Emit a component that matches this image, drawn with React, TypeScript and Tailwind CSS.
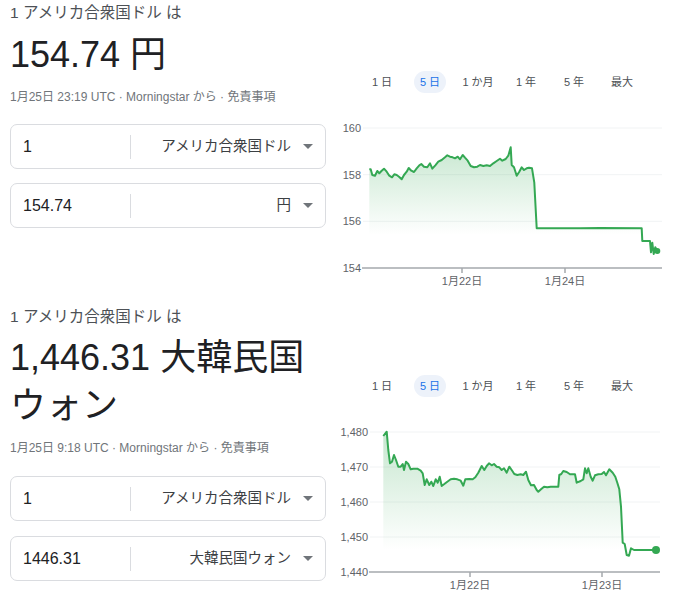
import React from 'react';

interface Tick {
    pos: number;
    label: string;
}

interface ChartProps {
    id: string;
    top: number;
    gridStart: number;
    gridEnd: number;
    labelEnd: number;
    yTicks: Tick[];
    xTicks: Tick[];
    axisY: number;
    points: number[][];
    fadeFrom: number;
    fadeTo: number;
    dotR: number;
}

const tabs = ['1 日', '5 日', '1 か月', '1 年', '5 年', '最大'];

// usd/jpy, 5 days
const jpyPoints = [
    [369.3, 169.3], [370.7, 169.3], [372.3, 175], [375, 175.7], [377.3, 171], [379.3, 173.3], [381.7, 170.7],
    [384, 168.7], [386.7, 171.7], [389.3, 175.7], [392, 177.3], [394.3, 174.3], [396.7, 175], [399, 176.7],
    [401.7, 179.3], [404, 175], [406.7, 171.7], [408.7, 168], [411.3, 170.7], [414, 172], [416.7, 168.3],
    [419.3, 165.3], [421.3, 164], [424, 166.7], [427.3, 167.3], [430, 163.3], [432.3, 168.7], [435.3, 165.3],
    [438.3, 161.7], [441.7, 160], [445, 157.3], [447.3, 155.3], [450, 156.7], [452.7, 157.3], [455, 158.3],
    [457.7, 156.7], [460, 159.3], [462.7, 155], [465, 157.7], [467.7, 160.7], [470.7, 166], [474, 167.3],
    [477.3, 166.7], [480, 165], [483.3, 166], [486.7, 165.3], [490, 166], [493.3, 163.3], [496.7, 161],
    [500, 158.7], [502.3, 160.7], [505.7, 159], [508.3, 155.7], [510.7, 147.3], [511.7, 165], [514, 167.3],
    [516.7, 175.7], [519.3, 171.7], [521.7, 167.3], [524, 170], [526.7, 168.3], [529, 167.7], [532, 168.3],
    [534.3, 182.7], [536.7, 228.3], [580, 228.3], [600, 228], [641.7, 228.3], [642.3, 241], [650, 241],
    [651, 252.3], [652.3, 242.7], [653.7, 254], [655.3, 247.3], [657.3, 251],
];

// usd/krw, 5 days
const krwPoints = [
    [383.3, 436], [386.7, 431.7], [388.3, 450], [390, 463.3], [392, 461.7], [394, 455], [396, 460],
    [398.3, 466.7], [400.7, 466.7], [402.7, 464], [404, 470], [406, 461.7], [408.3, 464], [410.7, 469.3],
    [413.3, 468.7], [417.3, 468.7], [420.7, 470.7], [422.7, 473.3], [424.7, 485], [426.7, 479.3], [429.3, 485],
    [431.3, 481.7], [433.3, 486], [435.7, 479.3], [437.7, 482.7], [439.7, 476.7], [441.7, 486], [444, 484.3],
    [447.3, 481.7], [450.7, 479.3], [454, 478.7], [457.3, 479.3], [460.7, 480.7], [463.3, 485.7], [465.3, 479.3],
    [469.3, 479], [472.7, 479.3], [475.3, 477.3], [478.3, 472.7], [481.7, 466], [484.3, 470], [486.7, 466],
    [489, 463.3], [491.7, 465.3], [494, 464], [496.7, 466.7], [499.3, 467.3], [501.7, 470], [504, 468.3],
    [506.7, 472.7], [509.3, 466.7], [511.7, 470], [514.3, 474], [517.3, 475], [520.7, 474.3], [523.3, 475],
    [526, 471.7], [528.3, 480], [531, 485.3], [534, 485], [536.7, 490], [538.3, 491.7], [541, 489.3],
    [544, 486.7], [547.3, 487.3], [550.7, 486.7], [558.3, 486.7], [559.3, 475], [561.3, 474], [563.3, 471],
    [566.7, 472], [570, 474.3], [575, 474.3], [576.7, 482.7], [580.7, 481], [583.3, 479.3], [585, 468.3],
    [586.7, 473.3], [588.3, 468.3], [590.7, 476.7], [592.7, 480.7], [595, 475.3], [598.3, 474.3], [601.7, 474],
    [604, 472], [606, 475.3], [609.3, 469.3], [612.7, 472.7], [615.3, 476.7], [617.3, 482.7], [619.3, 489.3],
    [621, 506.7], [622.7, 542.7], [624.7, 544], [626.7, 555], [629, 555.7], [631, 548.3], [634, 550], [656, 550],
];

const Chart = ({ id, top, gridStart, gridEnd, labelEnd, yTicks, xTicks, axisY, points, fadeFrom, fadeTo, dotR }: ChartProps) => {
    const line = points.map((p) => p.join(',')).join(' ');
    const first = points[0];
    const last = points[points.length - 1];
    const area = `${line} ${last[0]},${axisY} ${first[0]},${axisY}`;

    return (
        <svg width={339} height={180} viewBox={`336 ${top} 339 180`} className="mt-[17px] block">
            <defs>
                <linearGradient id={id} gradientUnits="userSpaceOnUse" x1="0" x2="0" y1={fadeFrom} y2={fadeTo}>
                    <stop offset="0" stopColor="#34a853" stopOpacity="0.26" />
                    <stop offset="1" stopColor="#34a853" stopOpacity="0" />
                </linearGradient>
            </defs>
            {yTicks.map((t) => (
                <g key={t.label}>
                    {t.pos !== axisY && (
                        <line x1={gridStart} x2={gridEnd} y1={t.pos} y2={t.pos} stroke="#f1f3f4" strokeWidth="1" />
                    )}
                    <text x={labelEnd} y={t.pos + 4} textAnchor="end" fontSize="11" fill="#5f6368">
                        {t.label}
                    </text>
                </g>
            ))}
            <polygon points={area} fill={`url(#${id})`} />
            <line x1={gridStart - 1} x2={gridEnd} y1={axisY} y2={axisY} stroke="#a4a8ad" strokeWidth="1.5" />
            {xTicks.map((t) => (
                <g key={t.label}>
                    <line x1={t.pos} x2={t.pos} y1={axisY} y2={axisY + 5} stroke="#a4a8ad" strokeWidth="1.5" />
                    <text x={t.pos} y={axisY + 17} textAnchor="middle" fontSize="11" fill="#5f6368">
                        {t.label}
                    </text>
                </g>
            ))}
            <polyline points={line} fill="none" stroke="#34a853" strokeWidth="2" strokeLinejoin="round" />
            <circle cx={last[0]} cy={last[1]} r={dotR} fill="#34a853" />
        </svg>
    );
};

const Tabs = () => (
    <div className="flex items-center pl-[22px] h-[22px] text-[11px] text-[#4d5156]">
        {tabs.map((t) => (
            <div key={t} className="w-[48px] flex justify-center">
                <span
                    className={
                        t === '5 日'
                            ? 'px-[6px] leading-[22px] rounded-full bg-[#edf2fa] text-[#1a73e8]'
                            : 'px-[6px] leading-[22px]'
                    }
                >
                    {t}
                </span>
            </div>
        ))}
    </div>
);

const CurrencyBox = ({ amount, currency, className }: { amount: string; currency: string; className: string }) => (
    <div className={`flex items-center h-[45px] border border-[#dadce0] rounded-[7px] ${className}`}>
        <div className="w-[119px] pl-[12px] text-[16px] text-[#202124]">{amount}</div>
        <div className="w-px h-[24px] bg-[#dadce0]" />
        <div className="flex-1 flex items-center justify-end gap-[12px] pr-[12px] text-[14.5px] text-[#3c4043]">
            <span>{currency}</span>
            <span className="w-0 h-0 border-l-[5px] border-r-[5px] border-t-[5px] border-l-transparent border-r-transparent border-t-[#70757a]" />
        </div>
    </div>
);

export default function App() {
    return (
        <div className="w-[675px] h-[593px] overflow-hidden bg-white font-['Liberation_Sans','Noto_Sans_CJK_JP',sans-serif]">
            {/* 円 */}
            <div className="flex">
                <div className="ml-[10px] w-[316px] pt-[3px]">
                    <div className="text-[15.5px] leading-[20px] text-[#4d5156]">1 アメリカ合衆国ドル は</div>
                    <div className="mt-[8px] text-[36px] leading-[48px] text-[#202124]">154.74 円</div>
                    <div className="mt-[10px] text-[12px] leading-[16px] text-[#70757a]">
                        1月25日 23:19 UTC · Morningstar から · 免責事項
                    </div>
                    <CurrencyBox amount="1" currency="アメリカ合衆国ドル" className="mt-[19px]" />
                    <CurrencyBox amount="154.74" currency="円" className="mt-[14px]" />
                </div>
                <div className="ml-[10px] w-[339px] pt-[71px]">
                    <Tabs />
                    <Chart
                        id="jpy"
                        top={110}
                        gridStart={363}
                        gridEnd={662}
                        labelEnd={361}
                        axisY={268}
                        yTicks={[
                            { pos: 128, label: '160' },
                            { pos: 174.7, label: '158' },
                            { pos: 221.3, label: '156' },
                            { pos: 268, label: '154' },
                        ]}
                        xTicks={[
                            { pos: 462, label: '1月22日' },
                            { pos: 565, label: '1月24日' },
                        ]}
                        points={jpyPoints}
                        fadeFrom={150}
                        fadeTo={235}
                        dotR={3}
                    />
                </div>
            </div>

            {/* ウォン */}
            <div className="flex mt-[14px]">
                <div className="ml-[10px] w-[316px] pt-[3px]">
                    <div className="text-[15.5px] leading-[20px] text-[#4d5156]">1 アメリカ合衆国ドル は</div>
                    <div className="mt-[7px] text-[36px] leading-[48px] text-[#202124]">1,446.31 大韓民国ウォン</div>
                    <div className="mt-[10px] text-[12px] leading-[16px] text-[#70757a]">
                        1月25日 9:18 UTC · Morningstar から · 免責事項
                    </div>
                    <CurrencyBox amount="1" currency="アメリカ合衆国ドル" className="mt-[20px]" />
                    <CurrencyBox amount="1446.31" currency="大韓民国ウォン" className="mt-[15px]" />
                </div>
                <div className="ml-[10px] w-[339px] pt-[71px]">
                    <Tabs />
                    <Chart
                        id="krw"
                        top={414}
                        gridStart={370}
                        gridEnd={660}
                        labelEnd={368}
                        axisY={572}
                        yTicks={[
                            { pos: 432, label: '1,480' },
                            { pos: 467, label: '1,470' },
                            { pos: 502, label: '1,460' },
                            { pos: 537, label: '1,450' },
                            { pos: 572, label: '1,440' },
                        ]}
                        xTicks={[
                            { pos: 470, label: '1月22日' },
                            { pos: 602, label: '1月23日' },
                        ]}
                        points={krwPoints}
                        fadeFrom={440}
                        fadeTo={550}
                        dotR={4}
                    />
                </div>
            </div>
        </div>
    );
}
